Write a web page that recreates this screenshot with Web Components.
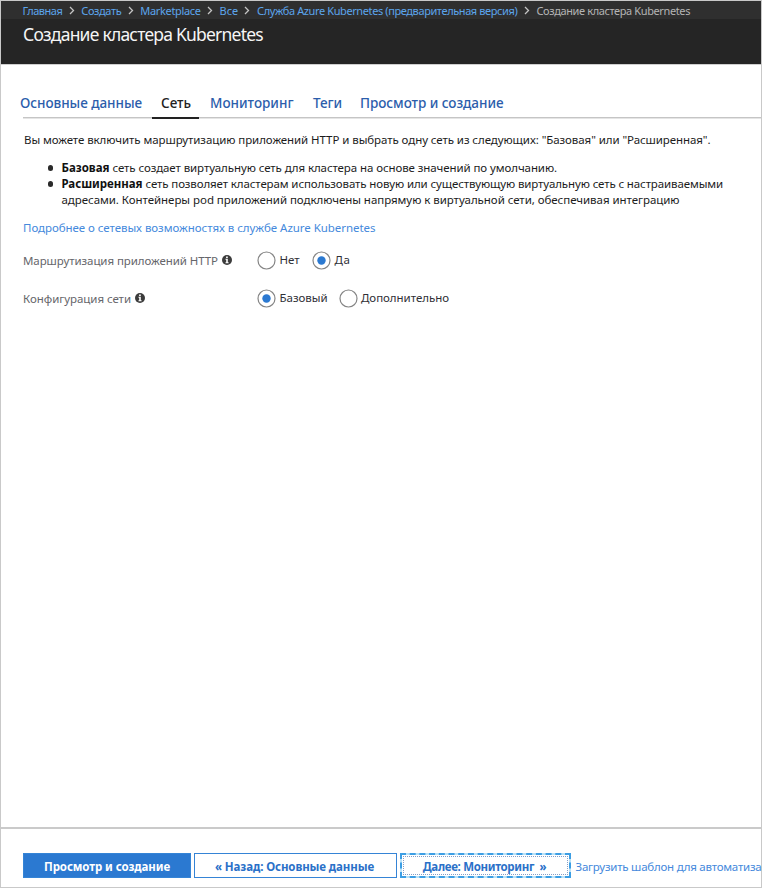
<!DOCTYPE html>
<html lang="ru">
<head>
<meta charset="utf-8">
<title>Создание кластера Kubernetes</title>
<style>
html, body { margin: 0; padding: 0; background: #fff; }
body { width: 762px; height: 888px; overflow: hidden; font-family: "Noto Sans", "Open Sans", sans-serif; }
</style>
</head>
<body>
<cluster-page></cluster-page>
<script>
const define = (name, html, init) => customElements.define(name, class extends HTMLElement {
  constructor() {
    super();
    this.attachShadow({ mode: 'open' }).innerHTML = html;
  }
  connectedCallback() { if (init) init.call(this); }
});

/* One line of text, tracked so that it fills the width given in "w". */
define('fit-text', `<style>
  :host { display: block; flex: none; white-space: pre; }
  span { display: inline-block; }
</style><span><slot></slot></span>`, function () {
  const w = parseFloat(this.getAttribute('w'));
  this.style.width = w + 'px';
  const span = this.shadowRoot.querySelector('span');
  const natural = span.getBoundingClientRect().width;
  const count = this.textContent.length;
  span.style.letterSpacing = ((w - natural) / count).toFixed(4) + 'px';
});

define('crumb-chevron', `<style>
  :host { display: block; flex: none; width: 19px; height: 9px; }
  svg { display: block; margin: 0 auto; }
</style><svg width="6" height="9" viewBox="0 0 6 9"><path d="M1 1 4.5 4.5 1 8" fill="none" stroke="#c4c4c4" stroke-width="1.3"/></svg>`);

define('page-header', `<style>
  :host { display: block; height: 64px; background: #252525; border-bottom: 1px solid #cfcfcf; box-sizing: border-box; }
  nav { display: flex; align-items: center; box-sizing: border-box; height: 18px; padding: 1px 0 0 21.5px; background: #2f2f2f; font-size: 11px; line-height: 18px; color: #5ca5ec; }
  .now { color: #b4b4b4; }
  h1 { margin: 0; padding: 2px 0 0 22px; font-size: 17.5px; line-height: 26px; font-weight: 400; color: #f5f5f5; }
</style>
<nav>
  <fit-text w="39.8">Главная</fit-text><crumb-chevron></crumb-chevron>
  <fit-text w="40">Создать</fit-text><crumb-chevron></crumb-chevron>
  <fit-text w="60.3">Marketplace</fit-text><crumb-chevron></crumb-chevron>
  <fit-text w="18.4">Все</fit-text><crumb-chevron></crumb-chevron>
  <fit-text w="260.4">Служба Azure Kubernetes (предварительная версия)</fit-text><crumb-chevron></crumb-chevron>
  <fit-text class="now" w="153.7">Создание кластера Kubernetes</fit-text>
</nav>
<h1><fit-text w="240">Создание кластера Kubernetes</fit-text></h1>`);

define('page-tab', `<style>
  :host { display: block; flex: none; height: 30px; box-sizing: border-box; padding: 0 10px; color: #2b5dab; border-bottom: 2px solid transparent; font-weight: 500; font-size: 13.5px; line-height: 28px; }
  :host([active]) { color: #222; border-color: #222; }
</style><slot></slot>`);

define('tab-bar', `<style>
  :host { display: flex; height: 30px; padding-left: 10px; position: relative; }
  :host::before { content: ""; position: absolute; left: 22px; right: 0; bottom: 0; height: 2px; background: linear-gradient(#c5c5c5 50%, #e5e5e5 50%); }
  page-tab { position: relative; }
</style>
<page-tab style="margin-left:-1px"><fit-text w="122">Основные данные</fit-text></page-tab>
<page-tab active style="padding:0 8px 0 9px"><fit-text w="30">Сеть</fit-text></page-tab>
<page-tab style="margin-left:1px"><fit-text w="83.5">Мониторинг</fit-text></page-tab>
<page-tab style="margin-left:-.5px"><fit-text w="29">Теги</fit-text></page-tab>
<page-tab style="margin-left:-2px"><fit-text w="143.5">Просмотр и создание</fit-text></page-tab>`);

define('intro-text', `<style>
  :host { display: block; font-size: 11.5px; line-height: 16px; color: #1c1c1c; padding-left: 23px; }
  ul { list-style: none; margin: 12px 0 0; padding: 0; }
  li { display: grid; grid-template-columns: 37.5px auto; }
  li::before { content: ""; width: 5.5px; height: 5.5px; border-radius: 50%; background: #2a2a2a; margin: 5px 0 0 23.5px; }
  .line { display: flex; gap: 3px; }
  b { display: block; font-weight: 700; color: #111; }
  .link { color: #4589dc; margin: 12px 0 0 -1px; }
</style>
<fit-text w="686.5">Вы можете включить маршрутизацию приложений HTTP и выбрать одну сеть из следующих: "Базовая" или "Расширенная".</fit-text>
<ul>
  <li><div class="line"><b><fit-text w="48">Базовая</fit-text></b><fit-text w="444.5">сеть создает виртуальную сеть для кластера на основе значений по умолчанию.</fit-text></div></li>
  <li><div><div class="line"><b><fit-text w="81">Расширенная</fit-text></b><fit-text w="577.5">сеть позволяет кластерам использовать новую или существующую виртуальную сеть с настраиваемыми</fit-text></div>
  <fit-text w="618">адресами. Контейнеры pod приложений подключены напрямую к виртуальной сети, обеспечивая интеграцию</fit-text></div></li>
</ul>
<fit-text class="link" w="352.5">Подробнее о сетевых возможностях в службе Azure Kubernetes</fit-text>`);

define('info-icon', `<style>:host { display: block; flex: none; } svg { display: block; }</style>
<svg width="10" height="10" viewBox="0 0 10 10"><circle cx="5" cy="5" r="5" fill="#3c3c3c"/><path d="M4.1 1.5h1.7v1.4H4.1zM3.5 3.8h2.3v3.5h.8v1H3.5v-1h.7V4.8h-.7z" fill="#fff"/></svg>`);

define('radio-option', `<style>
  :host { display: flex; gap: 3.5px; height: 19px; flex: none; font-size: 11.5px; line-height: 17px; color: #2f2f36; }
  svg { display: block; flex: none; }
  circle + circle { display: none; }
  :host([checked]) circle + circle { display: block; }
</style>
<svg width="19" height="19" viewBox="0 0 19 19"><circle cx="9.5" cy="9.5" r="8.5" fill="#fff" stroke="#858585" stroke-width="1.2"/><circle cx="9.5" cy="9.5" r="4.2" fill="#2b79d1"/></svg>
<slot></slot>`);

define('form-row', `<style>
  :host { display: flex; height: 38px; padding-left: 22px; }
  .label { display: flex; width: 234px; flex: none; font-size: 11.5px; line-height: 20px; color: #66666b; gap: 4px; }
  .label info-icon { margin-top: 4px; }
  .options { display: flex; }
</style>
<div class="label"><slot name="label"></slot><info-icon></info-icon></div>
<div class="options"><slot></slot></div>`);

define('action-button', `<style>
  :host { display: flex; justify-content: center; flex: none; box-sizing: border-box; height: 25px; border: 1px solid #3584d6; color: #2a70c8; background: #fff; font-size: 11.5px; line-height: 25px; font-weight: 700; }
  :host([primary]) { background: #2b79d1; color: #fff; }
  :host([focused]) { border: 2px dashed #3c9ee4; outline: 1px dotted #849fc8; outline-offset: -4px; line-height: 23px; background: linear-gradient(#fff, #fff) padding-box, linear-gradient(#b9e2f8, #b9e2f8) border-box; }
</style><slot></slot>`);

define('page-footer', `<style>
  :host { display: flex; height: 60px; box-sizing: border-box; border-top: 2px solid #cacaca; padding: 24px 0 0 22px; }
  .download { font-size: 11.5px; line-height: 27px; color: #4589dc; margin-left: 4.5px; }
</style>
<action-button primary style="width:168px"><fit-text w="126">Просмотр и создание</fit-text></action-button>
<action-button style="width:203px;margin-left:3px;padding-right:2px"><fit-text w="159">« Назад: Основные данные</fit-text></action-button>
<action-button focused style="width:171px;margin-left:3px;padding-right:2px"><fit-text w="123.5">Далее: Мониторинг  »</fit-text></action-button>
<fit-text class="download" w="186">Загрузить шаблон для автоматиза</fit-text>`);

define('cluster-page', `<style>
  :host { display: flex; flex-direction: column; width: 762px; height: 888px; box-sizing: border-box; border: 1px solid #c9c9c9; background: #fff; }
  tab-bar { margin-top: 24px; }
  intro-text { margin-top: 13px; }
  form-row { flex: none; }
  form-row:first-of-type { margin-top: 15px; }
  page-header, tab-bar, page-footer { flex: none; }
  page-footer { margin-top: auto; }
</style>
<page-header></page-header>
<tab-bar></tab-bar>
<intro-text></intro-text>
<form-row><fit-text slot="label" w="195">Маршрутизация приложений HTTP</fit-text>
  <radio-option><fit-text w="20">Нет</fit-text></radio-option>
  <radio-option checked style="margin-left:12.5px"><fit-text w="16">Да</fit-text></radio-option></form-row>
<form-row><fit-text slot="label" w="108">Конфигурация сети</fit-text>
  <radio-option checked><fit-text w="48">Базовый</fit-text></radio-option>
  <radio-option style="margin-left:11px"><fit-text w="88">Дополнительно</fit-text></radio-option></form-row>
<page-footer></page-footer>`);
</script>
</body>
</html>
